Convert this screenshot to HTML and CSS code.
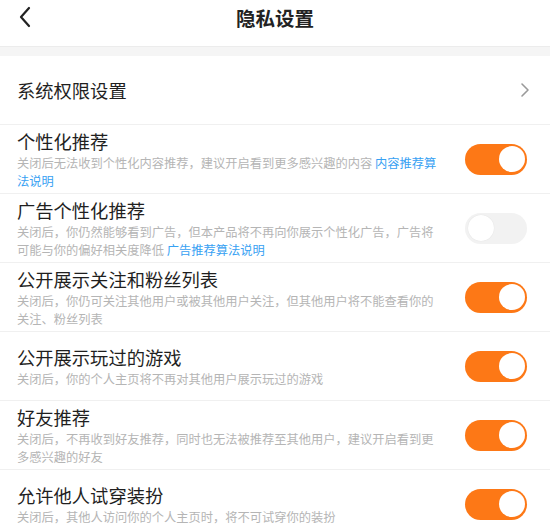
FILE: index.html
```html
<!DOCTYPE html>
<html lang="zh-CN">
<head>
    <meta charset="UTF-8">
    <meta name="viewport" content="width=device-width, initial-scale=1.0">
    <title>隐私设置</title>
    <link rel="stylesheet" href="styles.css">
</head>
<body>
    <div class="header">
        <span class="back">
            <svg width="14" height="22" viewBox="0 0 14 22"><path d="M11 2 L3 11 L11 20" fill="none" stroke="#222" stroke-width="2.2" stroke-linecap="round" stroke-linejoin="round"/></svg>
        </span>
        <h1>隐私设置</h1>
    </div>
    <div class="band"></div>

    <div class="row link-row">
        <div class="title">系统权限设置</div>
        <svg class="arrow" width="10" height="16" viewBox="0 0 10 16"><path d="M2 2 L8 8 L2 14" fill="none" stroke="#9a9a9a" stroke-width="1.6" stroke-linecap="round" stroke-linejoin="round"/></svg>
    </div>

    <div class="row">
        <div class="text">
            <div class="title">个性化推荐</div>
            <div class="desc">关闭后无法收到个性化内容推荐，建议开启看到更多感兴趣的内容 <a>内容推荐算法说明</a></div>
        </div>
        <div class="switch on"><span class="knob"></span></div>
    </div>

    <div class="row">
        <div class="text">
            <div class="title">广告个性化推荐</div>
            <div class="desc">关闭后，你仍然能够看到广告，但本产品将不再向你展示个性化广告，广告将可能与你的偏好相关度降低 <a>广告推荐算法说明</a></div>
        </div>
        <div class="switch"><span class="knob"></span></div>
    </div>

    <div class="row">
        <div class="text">
            <div class="title">公开展示关注和粉丝列表</div>
            <div class="desc">关闭后，你仍可关注其他用户或被其他用户关注，但其他用户将不能查看你的关注、粉丝列表</div>
        </div>
        <div class="switch on"><span class="knob"></span></div>
    </div>

    <div class="row">
        <div class="text">
            <div class="title">公开展示玩过的游戏</div>
            <div class="desc">关闭后，你的个人主页将不再对其他用户展示玩过的游戏</div>
        </div>
        <div class="switch on"><span class="knob"></span></div>
    </div>

    <div class="row">
        <div class="text">
            <div class="title">好友推荐</div>
            <div class="desc">关闭后，不再收到好友推荐，同时也无法被推荐至其他用户，建议开启看到更多感兴趣的好友</div>
        </div>
        <div class="switch on"><span class="knob"></span></div>
    </div>

    <div class="row">
        <div class="text">
            <div class="title">允许他人试穿装扮</div>
            <div class="desc">关闭后，其他人访问你的个人主页时，将不可试穿你的装扮</div>
        </div>
        <div class="switch on"><span class="knob"></span></div>
    </div>
</body>
</html>
```

FILE: styles.css
```css
body {
    margin: 0;
    background: #fff;
    font-family: "Noto Sans CJK SC", "Noto Sans", sans-serif;
    color: #1f1f1f;
}

.header {
    position: relative;
    height: 46px;
    display: flex;
    justify-content: center;
}

.header h1 {
    margin: 0;
    height: 35px;
    line-height: 35px;
    font-size: 19.5px;
    font-weight: bold;
    color: #222;
}

.back {
    position: absolute;
    left: 18px;
    top: 6px;
}

.band {
    height: 9px;
    background: #f5f5f5;
    border-top: 1px solid #ececec;
}

.row {
    display: flex;
    align-items: center;
    justify-content: space-between;
    min-height: 68px;
    padding-left: 17px;
    padding-right: 23px;
    border-bottom: 1px solid #f0f0f0;
}

.link-row {
    height: 68px;
    padding-right: 20px;
}

.title {
    font-size: 18.3px;
    line-height: 26px;
}

.desc {
    width: 424px;
    font-size: 12.25px;
    line-height: 18px;
    color: #b5b5b5;
}

.desc a {
    color: #37a1f3;
}

.switch {
    flex: none;
    width: 62px;
    height: 31px;
    border-radius: 16px;
    background: #f2f2f2;
    display: flex;
    align-items: center;
    padding: 0 2.5px;
    box-sizing: border-box;
}

.switch.on {
    background: #fd7816;
    justify-content: flex-end;
}

.knob {
    width: 26px;
    height: 26px;
    border-radius: 50%;
    background: #fff;
}

.switch:not(.on) .knob {
    box-shadow: 0 0 1px rgba(0, 0, 0, 0.12);
}
```
